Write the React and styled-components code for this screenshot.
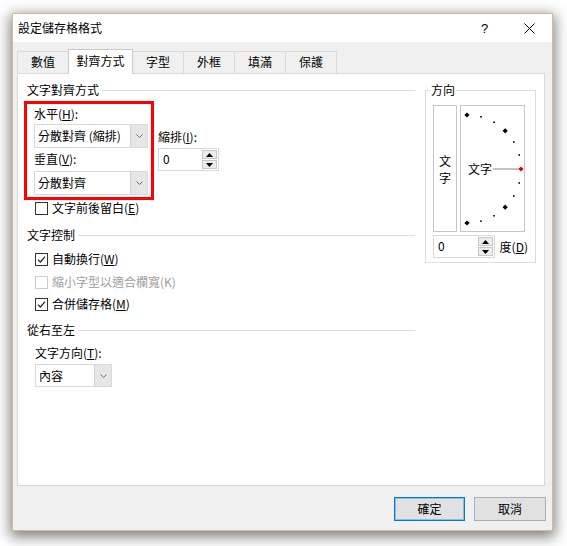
import React from "react";
import styled, { createGlobalStyle } from "styled-components";

const GlobalStyle = createGlobalStyle`
  body {
    margin: 0;
    background: #ffffff;
    font-family: "Noto Sans CJK TC", "Noto Sans", sans-serif;
    font-size: 12px;
    color: #000000;
  }
`;

const Page = styled.div`
  width: 567px;
  height: 546px;
  padding: 13px 0 0 12px;
  box-sizing: border-box;
`;

const Dialog = styled.div`
  width: 541px;
  height: 518px;
  box-sizing: border-box;
  border: 1px solid #d6bb8c;
  background: #f0f0f0;
  box-shadow: 0 4px 13px 2px rgba(0, 0, 0, 0.5);
  display: flex;
  flex-direction: column;
`;

const TitleBar = styled.div`
  height: 28px;
  background: #ffffff;
  display: flex;
  align-items: center;
  padding-left: 5px;
`;

const Title = styled.div`
  flex: 1;
  line-height: 16px;
`;

const TitleButton = styled.div`
  width: 45px;
  height: 28px;
  display: flex;
  align-items: center;
  justify-content: center;
  font-family: "Liberation Sans", sans-serif;
  font-size: 13px;
`;

const Body = styled.div`
  flex: 1;
  display: flex;
  flex-direction: column;
  padding: 7px 7px 8px 4px;
`;

const TabRow = styled.div`
  display: flex;
  align-items: flex-end;
  height: 24px;
`;

const Tab = styled.div`
  width: ${(p) => p.$width}px;
  height: ${(p) => (p.$active ? 25 : 22)}px;
  margin-bottom: ${(p) => (p.$active ? -1 : 0)}px;
  margin-right: -1px;
  box-sizing: border-box;
  border: 1px solid ${(p) => (p.$active ? "#c9c9c9" : "#dadada")};
  border-bottom: none;
  background: ${(p) => (p.$active ? "#ffffff" : "#f0f0f0")};
  position: relative;
  z-index: ${(p) => (p.$active ? 2 : 0)};
  display: flex;
  justify-content: center;
  padding-top: ${(p) => (p.$active ? 3 : 2)}px;
  line-height: 16px;
`;

const Panel = styled.div`
  height: 413px;
  box-sizing: border-box;
  border: 1px solid #d9d9d9;
  background: #ffffff;
  padding: 8px 0 0 9px;
  display: flex;
  gap: 10px;
  position: relative;
  z-index: 1;
`;

const LeftColumn = styled.div`
  width: 388px;
  display: flex;
  flex-direction: column;
`;

const GroupHeader = styled.div`
  display: flex;
  align-items: center;
  height: 16px;
  line-height: 16px;
  margin-top: ${(p) => p.$top || 0}px;

  &::after {
    content: "";
    flex: 1;
    height: 1px;
    margin-left: 3px;
    background: #dcdcdc;
  }
`;

const Label = styled.div`
  height: 16px;
  line-height: 16px;
  margin-top: ${(p) => p.$top || 0}px;
  margin-left: ${(p) => p.$left || 0}px;
  white-space: nowrap;
`;

const AlignRow = styled.div`
  display: flex;
  align-items: flex-start;
  margin-top: 3px;
`;

const Highlight = styled.div`
  width: 130px;
  box-sizing: border-box;
  margin-left: -3px;
  border: 3px solid #ff0000;
  padding: 1px 3px 2px 7px;
  display: flex;
  flex-direction: column;
`;

const IndentGroup = styled.div`
  margin-left: 4px;
  padding-top: 28px;
  display: flex;
  flex-direction: column;
`;

const Select = styled.div`
  width: ${(p) => p.$width}px;
  height: ${(p) => p.$height}px;
  margin-top: ${(p) => p.$top || 0}px;
  margin-left: ${(p) => p.$left || 0}px;
  box-sizing: border-box;
  border: 1px solid #d9d9d9;
  background: #ffffff;
  display: flex;
`;

const SelectText = styled.div`
  flex: 1;
  padding-left: 3px;
  display: flex;
  align-items: center;
  line-height: 16px;
  white-space: nowrap;
`;

const ArrowZone = styled.div`
  width: 16px;
  border-left: 1px solid #d2d2d2;
  background: #e6e6e6;
  display: flex;
  align-items: center;
  justify-content: center;
`;

const SpinBox = styled.div`
  width: ${(p) => p.$width}px;
  height: 23px;
  margin-top: ${(p) => p.$top || 0}px;
  box-sizing: border-box;
  border: 1px solid #d9d9d9;
  background: #ffffff;
  display: flex;
  padding: 1px;
`;

const SpinValue = styled.div`
  flex: 1;
  padding: 1px 0 0 3px;
  line-height: 16px;
`;

const SpinButtons = styled.div`
  width: 15px;
  display: flex;
  flex-direction: column;
  gap: 1px;
`;

const SpinButton = styled.div`
  flex: 1;
  box-sizing: border-box;
  border: 1px solid #c8c8c8;
  background: #ececec;
  display: flex;
  align-items: center;
  justify-content: center;
`;

const CheckRow = styled.div`
  display: flex;
  align-items: center;
  height: 16px;
  margin-top: ${(p) => p.$top || 0}px;
  margin-left: 8px;
  color: ${(p) => (p.$disabled ? "#a0a0a0" : "#000000")};
`;

const CheckBox = styled.div`
  width: 13px;
  height: 13px;
  box-sizing: border-box;
  border: 1px solid ${(p) => (p.$disabled ? "#cccccc" : "#333333")};
  background: #ffffff;
  margin-right: 4px;
  display: flex;
  align-items: center;
  justify-content: center;
`;

const CheckText = styled.span`
  line-height: 16px;
  white-space: nowrap;
`;

const OrientGroup = styled.fieldset`
  width: 111px;
  box-sizing: border-box;
  margin: 0;
  min-width: 0;
  height: fit-content;
  border: 1px solid #dcdcdc;
  padding: 7px 7px 4px 7px;
`;

const OrientLegend = styled.legend`
  padding: 0 1px;
  margin-left: -3px;
  line-height: 16px;
  height: 16px;
`;

const OrientRow = styled.div`
  display: flex;
  gap: 3px;
`;

const VerticalText = styled.div`
  width: 24px;
  height: 127px;
  box-sizing: border-box;
  border: 1px solid #c6c6c6;
  display: flex;
  flex-direction: column;
  align-items: center;
  justify-content: center;
  line-height: 17px;
`;

const Dial = styled.div`
  width: 65px;
  height: 127px;
  box-sizing: border-box;
  border: 1px solid #c6c6c6;
  display: flex;
`;

const DegreeRow = styled.div`
  display: flex;
  align-items: center;
  margin-top: 3px;
`;

const ButtonRow = styled.div`
  display: flex;
  justify-content: flex-end;
  gap: 9px;
  margin-top: 11px;
  margin-right: -1px;
`;

const Button = styled.div`
  width: ${(p) => p.$width}px;
  height: 24px;
  box-sizing: border-box;
  border: 1px solid ${(p) => (p.$primary ? "#0078d7" : "#adadad")};
  box-shadow: ${(p) => (p.$primary ? "inset 0 0 0 1px rgba(0,120,215,0.35)" : "none")};
  background: #e1e1e1;
  display: flex;
  align-items: center;
  justify-content: center;
  line-height: 16px;
`;

function Chevron() {
  return (
    <svg width="7" height="4" viewBox="0 0 7 4">
      <polyline points="0.5,0.5 3.5,3.5 6.5,0.5" fill="none" stroke="#707070" strokeWidth="1" />
    </svg>
  );
}

function Combo({ text, width, height, top, left }) {
  return (
    <Select $width={width} $height={height} $top={top} $left={left}>
      <SelectText>{text}</SelectText>
      <ArrowZone>
        <Chevron />
      </ArrowZone>
    </Select>
  );
}

function Spinner({ value, width, top }) {
  return (
    <SpinBox $width={width} $top={top}>
      <SpinValue>{value}</SpinValue>
      <SpinButtons>
        <SpinButton>
          <svg width="7" height="4" viewBox="0 0 7 4">
            <polygon points="0,4 3.5,0 7,4" fill="#000" />
          </svg>
        </SpinButton>
        <SpinButton>
          <svg width="7" height="4" viewBox="0 0 7 4">
            <polygon points="0,0 7,0 3.5,4" fill="#000" />
          </svg>
        </SpinButton>
      </SpinButtons>
    </SpinBox>
  );
}

function Check({ checked, disabled, top, children }) {
  return (
    <CheckRow $top={top} $disabled={disabled}>
      <CheckBox $disabled={disabled}>
        {checked && (
          <svg width="9" height="9" viewBox="0 0 9 9">
            <polyline points="1,4.6 3.4,7 8,1.6" fill="none" stroke="#222" strokeWidth="1.2" />
          </svg>
        )}
      </CheckBox>
      <CheckText>{children}</CheckText>
    </CheckRow>
  );
}

const angles = [90, 75, 60, 45, 30, 15, 0, -15, -30, -45, -60, -75, -90];

function OrientationDial() {
  let cx = 6;
  let cy = 63;
  let r = 54;
  return (
    <svg width="63" height="125" viewBox="0 0 63 125">
      {angles.map((a) => {
        let x = cx + r * Math.cos((a * Math.PI) / 180);
        let y = cy - r * Math.sin((a * Math.PI) / 180);
        if (a % 45 === 0) {
          return (
            <polygon
              key={a}
              points={`${x},${y - 2.6} ${x + 2.6},${y} ${x},${y + 2.6} ${x - 2.6},${y}`}
              fill={a === 0 ? "#e00000" : "#000"}
            />
          );
        }
        return <rect key={a} x={x - 0.8} y={y - 0.8} width="1.6" height="1.6" fill="#000" />;
      })}
      <line x1="32" y1={cy} x2="58" y2={cy} stroke="#8a8a8a" strokeWidth="1" />
      <text
        x="7"
        y={cy + 4.5}
        fontSize="12"
        fontFamily='"Noto Sans CJK TC", sans-serif'
        fill="#000"
      >
        文字
      </text>
    </svg>
  );
}

const tabs = [
  { name: "數值", width: 52 },
  { name: "對齊方式", width: 65, active: true },
  { name: "字型", width: 52 },
  { name: "外框", width: 52 },
  { name: "填滿", width: 52 },
  { name: "保護", width: 52 },
];

export default function App() {
  return (
    <Page>
      <GlobalStyle />
      <Dialog>
        <TitleBar>
          <Title>設定儲存格格式</Title>
          <TitleButton>?</TitleButton>
          <TitleButton>
            <svg width="11" height="11" viewBox="0 0 11 11">
              <path d="M0.5 0.5 L10.5 10.5 M10.5 0.5 L0.5 10.5" stroke="#000" strokeWidth="1" />
            </svg>
          </TitleButton>
        </TitleBar>

        <Body>
          <TabRow>
            {tabs.map((t) => (
              <Tab key={t.name} $width={t.width} $active={t.active}>
                {t.name}
              </Tab>
            ))}
          </TabRow>

          <Panel>
            <LeftColumn>
              <GroupHeader>文字對齊方式</GroupHeader>
              <AlignRow>
                <Highlight>
                  <Label $top={1}>
                    水平(<u>H</u>):
                  </Label>
                  <Combo text="分散對齊 (縮排)" width={114} height={24} top={2} />
                  <Label $top={3}>
                    垂直(<u>V</u>):
                  </Label>
                  <Combo text="分散對齊" width={114} height={24} top={4} />
                </Highlight>
                <IndentGroup>
                  <Label>
                    縮排(<u>I</u>):
                  </Label>
                  <Spinner value="0" width={61} top={3} />
                </IndentGroup>
              </AlignRow>
              <Check>
                文字前後留白(<u>E</u>)
              </Check>

              <GroupHeader $top={11}>文字控制</GroupHeader>
              <Check checked top={8}>
                自動換行(<u>W</u>)
              </Check>
              <Check disabled top={7}>
                縮小字型以適合欄寬(K)
              </Check>
              <Check checked top={6}>
                合併儲存格(<u>M</u>)
              </Check>

              <GroupHeader $top={10}>從右至左</GroupHeader>
              <Label $top={7} $left={8}>
                文字方向(<u>T</u>):
              </Label>
              <Combo text="內容" width={77} height={23} top={3} left={8} />
            </LeftColumn>

            <OrientGroup>
              <OrientLegend>方向</OrientLegend>
              <OrientRow>
                <VerticalText>
                  <span>文</span>
                  <span>字</span>
                </VerticalText>
                <Dial>
                  <OrientationDial />
                </Dial>
              </OrientRow>
              <DegreeRow>
                <Spinner value="0" width={63} />
                <Label $left={5}>
                  度(<u>D</u>)
                </Label>
              </DegreeRow>
            </OrientGroup>
          </Panel>

          <ButtonRow>
            <Button $width={71} $primary>
              確定
            </Button>
            <Button $width={72}>取消</Button>
          </ButtonRow>
        </Body>
      </Dialog>
    </Page>
  );
}
